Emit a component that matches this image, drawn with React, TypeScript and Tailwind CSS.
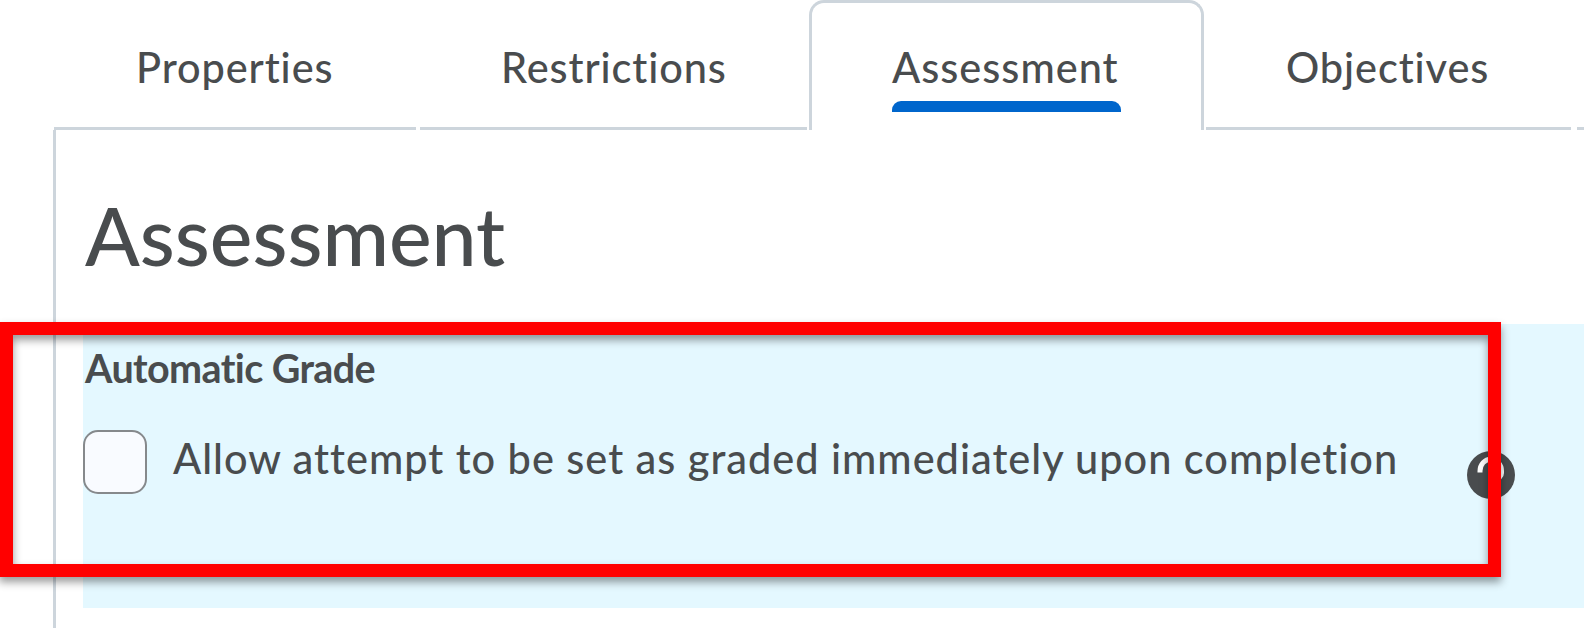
const tabs = [
  { label: "Properties", className: "w-[362px] pl-[82px] mr-1" },
  { label: "Restrictions", className: "w-[387px] pl-[81px] mr-0.5" },
  { label: "Assessment", className: "w-[395px] mr-0.5", active: true },
  { label: "Objectives", className: "w-[365px] pl-[80px] mr-1.5" },
  { label: "", className: "w-[20px]" },
];

function TabBar() {
  return (
    <div className="flex h-[130px] w-[1600px] pl-[54px]">
      {tabs.map((tab) =>
        tab.active ? (
          <div
            key={tab.label}
            className={`${tab.className} shrink-0 rounded-t-[15px] border-x-[3px] border-t-[3px] border-[#cdd5dc] pl-[80px] pt-[40px]`}
          >
            <div className="w-[229px] whitespace-nowrap tracking-[1px]">{tab.label}</div>
            <div className="mt-[10px] h-[11px] w-[229px] rounded-t-[9px] bg-[#0066cc]"></div>
          </div>
        ) : (
          <div
            key={tab.label}
            className={`${tab.className} shrink-0 whitespace-nowrap border-b-[3px] border-[#cdd5dc] pt-[43px] tracking-[0.9px]`}
          >
            {tab.label}
          </div>
        )
      )}
    </div>
  );
}

function HelpIcon() {
  return (
    <svg viewBox="0 0 48 48" className="h-12 w-12 shrink-0">
      <circle cx="24" cy="24" r="24" fill="#494c4e" />
      <path
        d="M13 21.5v-1.5a10.5 11.5 0 0 1 21.5 0v2c0 4-3 5-10.5 9"
        fill="none"
        stroke="#fff"
        strokeWidth="5"
      />
    </svg>
  );
}

export default function App() {
  return (
    <div className="relative h-[628px] w-[1584px] overflow-hidden bg-white font-['Lato',sans-serif] text-[41.5px] font-medium leading-[48px] text-[#494c4e]">
      <TabBar />

      {/* Tab panel */}
      <div className="ml-[53px] h-[498px] border-l-[3px] border-[#cdd5dc] pl-[27px]">
        <h1 className="h-[194px] pl-[2px] pt-[57px] text-[80.5px] font-medium leading-[96px]">Assessment</h1>

        <div className="h-[284px] bg-[#e4f8ff] pt-[20px]">
          <div className="pl-[2px] text-[39.5px] font-bold leading-[48px] tracking-[-0.6px]">
            Automatic Grade
          </div>
          <div className="flex items-start pt-[38px]">
            <div className="h-16 w-16 shrink-0 rounded-[15px] border-2 border-[#86898c] bg-[#f9fbff]"></div>
            <div className="w-[1320px] shrink-0 whitespace-nowrap pl-[26px] pt-[4px] tracking-[0.98px]">
              Allow attempt to be set as graded immediately upon completion
            </div>
            <div className="pt-[21px]">
              <HelpIcon />
            </div>
          </div>
        </div>
      </div>

      {/* Highlight frame */}
      <div className="absolute -left-px top-[322px] h-[255px] w-[1502px] border-[13px] border-l-[14px] border-[#ff0000] drop-shadow-[0_5px_4px_rgba(0,0,0,0.4)]"></div>
    </div>
  );
}
